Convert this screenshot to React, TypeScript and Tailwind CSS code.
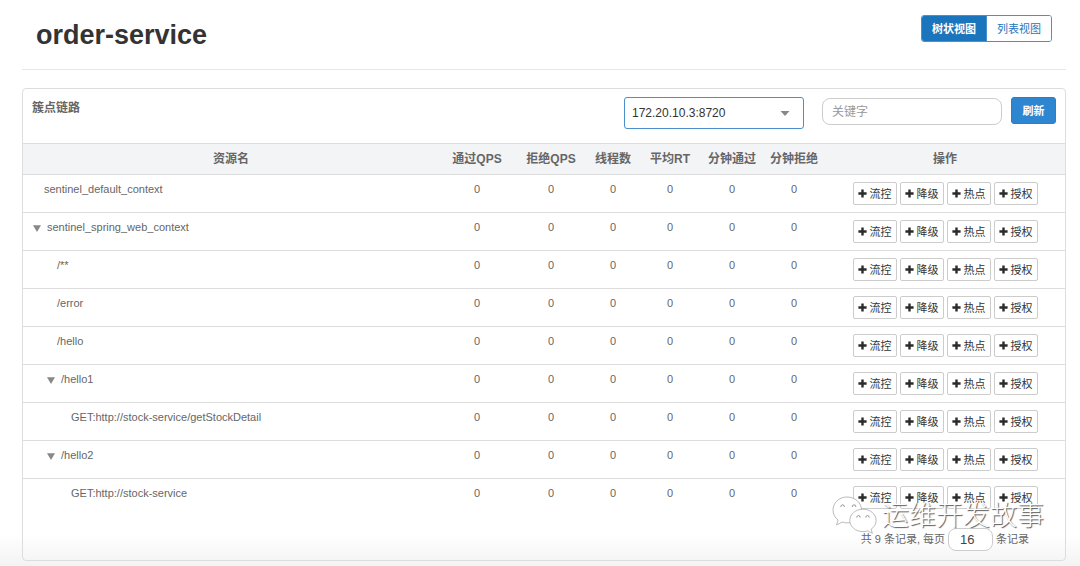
import { useState } from 'react';

interface ResourceNode {
  name: string;
  // left padding class for the depth in the tree
  indent: string;
  expandable?: boolean;
}

const RESOURCES: ResourceNode[] = [
  { name: 'sentinel_default_context', indent: 'pl-[21px]' },
  { name: 'sentinel_spring_web_context', indent: 'pl-[10px]', expandable: true },
  { name: '/**', indent: 'pl-[34px]' },
  { name: '/error', indent: 'pl-[34px]' },
  { name: '/hello', indent: 'pl-[34px]' },
  { name: '/hello1', indent: 'pl-[24px]', expandable: true },
  { name: 'GET:http://stock-service/getStockDetail', indent: 'pl-[48px]' },
  { name: '/hello2', indent: 'pl-[24px]', expandable: true },
  { name: 'GET:http://stock-service', indent: 'pl-[48px]' },
];

const METRICS = [
  { label: '通过QPS', width: 'w-[76px]' },
  { label: '拒绝QPS', width: 'w-[72px]' },
  { label: '线程数', width: 'w-[52px]' },
  { label: '平均RT', width: 'w-[62px]' },
  { label: '分钟通过', width: 'w-[62px]' },
  { label: '分钟拒绝', width: 'w-[62px]' },
];

const ACTIONS = ['流控', '降级', '热点', '授权'];

function PlusIcon() {
  return (
    <svg viewBox="0 0 9 9" className="h-[9px] w-[9px]" aria-hidden="true">
      <path d="M3.3 0.6h2.4v2.7h2.9v2.4H5.7v2.8H3.3V5.7H0.4V3.3h2.9z" fill="#2b2b2b" />
    </svg>
  );
}

function ViewSwitch() {
  return (
    <div className="flex h-[27px] overflow-hidden rounded-[3px] border border-[#4a90cc] text-[11px]">
      <button className="bg-[#1b75bc] px-[10px] font-bold text-white">树状视图</button>
      <button className="border-l border-[#4a90cc] bg-white px-[10px] text-[#1b75bc]">列表视图</button>
    </div>
  );
}

function Toolbar() {
  const [keyword, setKeyword] = useState('');

  return (
    <div className="flex h-[54px] items-start px-[9px] pt-2">
      <h2 className="pt-0.5 text-[12px] leading-[18px] font-bold text-[#666]">簇点链路</h2>
      <div className="relative ml-auto">
        <select
          aria-label="机器"
          className="h-8 w-[180px] appearance-none rounded-[3px] border border-[#4a90cc] bg-white px-[7px] text-[12px] text-[#333]"
        >
          <option>172.20.10.3:8720</option>
        </select>
        <svg viewBox="0 0 10 5" className="pointer-events-none absolute top-[14px] right-[14px] h-[5px] w-[10px]">
          <path d="M0.5 0h9L5 5z" fill="#888" />
        </svg>
      </div>
      <input
        aria-label="关键字"
        placeholder="关键字"
        value={keyword}
        onChange={(e) => setKeyword(e.target.value)}
        className="mt-px ml-[18px] h-[27px] w-[180px] rounded-[8px] border border-[#ccc] bg-white px-[9px] text-[12px] text-[#333] placeholder:text-[#999]"
      />
      <button className="ml-[9px] h-[27px] w-[45px] rounded-[3px] border border-[#2a7fc7] bg-[#2f86d0] text-[11px] font-bold text-white">
        刷新
      </button>
    </div>
  );
}

function ResourceRow({ node }: { node: ResourceNode }) {
  return (
    <tr className="h-[38px] border-b border-[#ddd] last:border-b-0">
      <td className={`pt-[6px] align-top ${node.indent}`}>
        <span className="flex items-center gap-[6px]">
          {node.expandable && (
            <svg viewBox="0 0 8 7" className="mt-[3px] h-[7px] w-[8px]">
              <path d="M0 0.3h8L4 7z" fill="#888" />
            </svg>
          )}
          {node.name}
        </span>
      </td>
      {METRICS.map((m) => (
        <td key={m.label} className="pt-[6px] text-center align-top">
          0
        </td>
      ))}
      <td className="pt-[7px] align-top">
        <div className="flex justify-center gap-[3px]">
          {ACTIONS.map((a) => (
            <button
              key={a}
              className="flex h-[23px] w-[44px] items-center justify-center gap-[3px] rounded-[2px] border border-[#ccc] bg-white text-[11px] text-[#333]"
            >
              <PlusIcon />
              {a}
            </button>
          ))}
        </div>
      </td>
    </tr>
  );
}

function Watermark() {
  return (
    <div className="pointer-events-none absolute right-[21px] bottom-[24px] flex items-center gap-[4px]">
      <svg viewBox="0 0 46 40" className="h-[40px] w-[46px]" aria-hidden="true">
        <g fill="#fff" stroke="#aaa" strokeWidth="0.8" strokeLinejoin="round">
          <path d="M15 1C7 1 1 6.800 1 14c0 4 2 7.600 5.100 10L4.500 29l5.600-2.900c1.600.5 3.200.8 4.900.8 8 0 14.500-5.700 14.500-12.900S23 1 15 1z" />
          <path d="M31 13.200c-7.400 0-13.200 4.900-13.200 11.200S23.600 35.600 31 35.600c1.700 0 3.400-.3 4.900-.7l4.500 2.500-1.300-4.200c3.200-2.100 5-5.200 5-8.800 0-6.300-5.700-11.200-13.100-11.200z" />
        </g>
        {/* eyes are only shaded along their upper edge */}
        <g fill="none" stroke="#888" strokeWidth="0.9" strokeLinecap="round">
          <path d="M8.800 10.600a1.800 1.800 0 0 1 3.600 0M20.300 10.600a1.800 1.800 0 0 1 3.600 0" />
          <path d="M24.800 21.200a1.700 1.700 0 0 1 3.400 0M33.800 21.200a1.700 1.700 0 0 1 3.400 0" />
        </g>
      </svg>
      <span className="text-[27px] leading-[36px] font-light text-white [text-shadow:1px_1px_1px_#555]">
        运维开发故事
      </span>
    </div>
  );
}

export default function App() {
  return (
    <div className="min-h-screen bg-[linear-gradient(to_top,#f3f3f3,#fff_32px)] pr-[14px] pb-[5px] pl-[22px] font-['Liberation_Sans','Noto_Sans_CJK_SC',sans-serif] text-[11px] leading-[16px] text-[#666]">
      <header className="flex h-[70px] items-start justify-between border-b border-[#e7e7e7] pt-[15px] pr-[14px] pl-[14px]">
        <h1 className="text-[27px] leading-[40px] font-bold text-[#333]">order-service</h1>
        <ViewSwitch />
      </header>

      <main className="relative mt-[18px] rounded-[4px] border border-[#ddd]">
        <Toolbar />
        <table className="w-full table-fixed border-collapse">
          <thead>
            <tr className="h-[31px] border-y border-[#ddd] bg-[#f3f4f6] text-[12px]">
              <th>资源名</th>
              {METRICS.map((m) => (
                <th key={m.label} className={m.width}>
                  {m.label}
                </th>
              ))}
              <th className="w-[240px]">操作</th>
            </tr>
          </thead>
          <tbody className="bg-white">
            {RESOURCES.map((node) => (
              <ResourceRow key={node.name} node={node} />
            ))}
          </tbody>
        </table>

        <footer className="flex h-[43px] items-start justify-end gap-[3px] pt-[11px] pr-[36px]">
          <label htmlFor="page-size" className="leading-[23px]">
            共 9 条记录, 每页
          </label>
          <input
            id="page-size"
            defaultValue="16"
            className="h-[23px] w-[45px] rounded-[8px] border border-[#ccc] bg-white px-[11px] text-[13px] text-[#444]"
          />
          <span className="leading-[23px]">条记录</span>
        </footer>
        <Watermark />
      </main>
    </div>
  );
}
